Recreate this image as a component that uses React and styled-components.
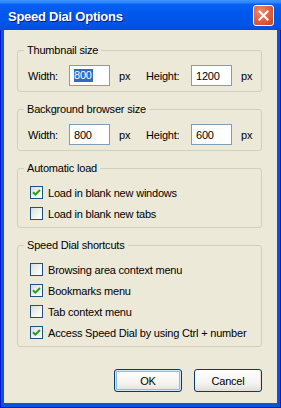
import React from 'react';
import styled, { createGlobalStyle } from 'styled-components';

const Global = createGlobalStyle`
  html, body {
    margin: 0;
    padding: 0;
    background: #ffffff;
  }
  body {
    font-family: "Liberation Sans", Arial, sans-serif;
  }
`;

const Window = styled.div`
  width: 281px;
  height: 408px;
  box-sizing: border-box;
  display: flex;
  flex-direction: column;
  background: #0855dd;
  box-shadow: inset 1px 0 #0019cf, inset -1px 0 #0019cf, inset 0 -1px #0019cf;
  font-size: 11px;
  letter-spacing: -0.2px;
  color: #000;
`;

const TitleBar = styled.div`
  height: 30px;
  flex: none;
  display: flex;
  align-items: center;
  justify-content: space-between;
  padding: 2px 7px 0 8px;
  box-sizing: border-box;
  background: linear-gradient(
    #3d93ff 0,
    #2c84fc 3px,
    #0762f4 4px,
    #0058ee 40%,
    #0055e8 80%,
    #004fd8 100%
  );
`;

const Title = styled.span`
  color: #fff;
  font-weight: bold;
  font-size: 13px;
  letter-spacing: -0.25px;
  text-shadow: 1px 1px #0a1883;
`;

const CloseButton = styled.div`
  width: 21px;
  height: 21px;
  box-sizing: border-box;
  border: 1px solid #fff;
  border-radius: 3px;
  margin-top: -2px;
  display: flex;
  align-items: center;
  justify-content: center;
  background: radial-gradient(circle at 35% 30%, #eb8b6c 0%, #d9613d 55%, #c2421e 100%);
`;

const Client = styled.div`
  flex: 1;
  margin: 0 4px 5px 4px;
  background: #ece9d8;
  padding: 13px 15px 0 13px;
  display: flex;
  flex-direction: column;
  gap: 10px;
`;

const Group = styled.fieldset`
  margin: 0;
  border: 1px solid #d0d0bf;
  border-radius: 3px;
  padding: ${p => p.$pad || '8px 0 5px 0'};
  min-width: 0;
`;

const Legend = styled.legend`
  margin-left: 6px;
  padding: 0 3px;
  line-height: 14px;
  height: 14px;
`;

const GroupBody = styled.div`
  padding-left: ${p => p.$indent}px;
`;

const SizeRow = styled.div`
  display: flex;
  align-items: center;
  height: 21px;
`;

const FieldLabel = styled.span`
  width: ${p => p.$w}px;
  flex: none;
`;

const Unit = styled.span`
  width: ${p => p.$w || 27}px;
  margin-left: 9px;
  flex: none;
`;

const Input = styled.div`
  width: 41px;
  height: 21px;
  box-sizing: border-box;
  flex: none;
  border: 1px solid #7f9db9;
  background: #fff;
  display: flex;
  align-items: center;
  padding-left: 4px;
`;

const Selected = styled.span`
  background: #316ac5;
  color: #fff;
  line-height: 13px;
  padding-right: 1px;
`;

const CheckRow = styled.div`
  display: flex;
  align-items: center;
  height: 21px;
  gap: 5px;
`;

const Box = styled.div`
  width: 13px;
  height: 13px;
  box-sizing: border-box;
  flex: none;
  border: 1px solid #1c5180;
  background: linear-gradient(135deg, #dcdcd7 0%, #f4f4f0 60%, #ffffff 100%);
  display: flex;
  align-items: center;
  justify-content: center;
`;

const Buttons = styled.div`
  display: flex;
  justify-content: flex-end;
  gap: 12px;
  margin-top: 12px;
`;

const Button = styled.div`
  width: 68px;
  height: 23px;
  box-sizing: border-box;
  border: 1px solid #003c74;
  border-radius: 3px;
  display: flex;
  align-items: center;
  justify-content: center;
  background: linear-gradient(#ffffff 0%, #f5f4f0 60%, #e8e5dc 90%, #d8d2c4 100%);
  box-shadow: ${p =>
    p.$default
      ? 'inset 0 0 0 1px #cee7ff, inset 0 0 0 2px #98b8ea'
      : 'inset -1px -1px 0 #e3e1d8'};
`;

const Check = () => (
  <svg width="9" height="9" viewBox="0 0 9 9">
    <path d="M1 4.2 L3.4 6.6 L8 2" fill="none" stroke="#21a121" strokeWidth="2" />
  </svg>
);

const CheckItem = ({ checked, children }) => (
  <CheckRow>
    <Box>{checked && <Check />}</Box>
    <span>{children}</span>
  </CheckRow>
);

const SizeFields = ({ w, h, selected }) => (
  <SizeRow>
    <FieldLabel $w={41}>Width:</FieldLabel>
    <Input>{selected ? <Selected>{w}</Selected> : w}</Input>
    <Unit>px</Unit>
    <FieldLabel $w={45}>Height:</FieldLabel>
    <Input>{h}</Input>
    <Unit $w={20}>px</Unit>
  </SizeRow>
);

export default function App() {
  return (
    <>
      <Global />
      <Window>
        <TitleBar>
          <Title>Speed Dial Options</Title>
          <CloseButton>
            <svg width="11" height="11" viewBox="0 0 11 11">
              <path d="M1.5 1.5 L9.5 9.5 M9.5 1.5 L1.5 9.5" stroke="#fff" strokeWidth="2" strokeLinecap="square" />
            </svg>
          </CloseButton>
        </TitleBar>
        <Client>
          <Group>
            <Legend>Thumbnail size</Legend>
            <GroupBody $indent={10}>
              <SizeFields w="800" h="1200" selected />
            </GroupBody>
          </Group>
          <Group>
            <Legend>Background browser size</Legend>
            <GroupBody $indent={10}>
              <SizeFields w="800" h="600" />
            </GroupBody>
          </Group>
          <Group $pad="7px 0 3px 0">
            <Legend>Automatic load</Legend>
            <GroupBody $indent={12}>
              <CheckItem checked>Load in blank new windows</CheckItem>
              <CheckItem>Load in blank new tabs</CheckItem>
            </GroupBody>
          </Group>
          <Group $pad="7px 0 3px 0">
            <Legend>Speed Dial shortcuts</Legend>
            <GroupBody $indent={12}>
              <CheckItem>Browsing area context menu</CheckItem>
              <CheckItem checked>Bookmarks menu</CheckItem>
              <CheckItem>Tab context menu</CheckItem>
              <CheckItem checked>Access Speed Dial by using Ctrl + number</CheckItem>
            </GroupBody>
          </Group>
          <Buttons>
            <Button $default>OK</Button>
            <Button>Cancel</Button>
          </Buttons>
        </Client>
      </Window>
    </>
  );
}
